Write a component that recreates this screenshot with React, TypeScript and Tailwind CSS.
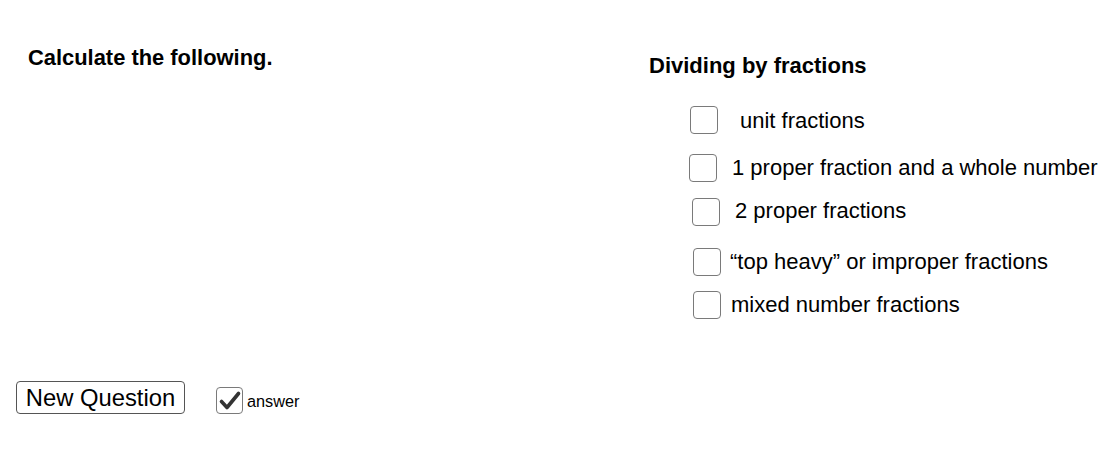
import React from "react";

const font = { fontFamily: '"Liberation Sans", Arial, sans-serif' };

function Box({ checked = false }: { checked?: boolean }) {
  return (
    <span className="flex h-[28px] w-[28px] shrink-0 items-center justify-center rounded-[4px] border border-[#7a7a7a] bg-white">
      {checked && (
        <svg width="24" height="24" viewBox="0 0 24 24">
          <path d="M3.5 12.5 L9 18.5 L20.5 4.5" fill="none" stroke="#333" strokeWidth="3.6" strokeLinecap="round" strokeLinejoin="round" />
        </svg>
      )}
    </span>
  );
}

const rows = [
  { label: "unit fractions", box: "ml-[41px]", gap: "gap-[22px]", top: "mt-[26px]", text: "mt-[1px]" },
  { label: "1 proper fraction and a whole number", box: "ml-[40px]", gap: "gap-[15px]", top: "mt-[20px]", text: "-mt-[1px]" },
  { label: "2 proper fractions", box: "ml-[43px]", gap: "gap-[15px]", top: "mt-[16px]", text: "-mt-[2px]" },
  { label: "\u201ctop heavy\u201d or improper fractions", box: "ml-[44px]", gap: "gap-[9px]", top: "mt-[22px]", text: "-mt-[1px]" },
  { label: "mixed number fractions", box: "ml-[44px]", gap: "gap-[10px]", top: "mt-[15px]", text: "-mt-[1px]" },
];

export default function App() {
  return (
    <div className="flex h-[455px] w-[1120px] overflow-hidden bg-white text-black" style={font}>
      {/* left side */}
      <div className="flex w-[649px] shrink-0 flex-col pl-[16px] pt-[46px]">
        <h1 className="ml-[12px] text-[21.9px] font-bold leading-[24px]">Calculate the following.</h1>
        <div className="mt-[311px] flex items-start">
          <button className="h-[33px] w-[169px] rounded-[4px] border border-[#555] bg-white text-[23.8px] leading-[31px]">
            New Question
          </button>
          <label className="ml-[31px] mt-[6px] flex items-center gap-[4px]">
            <span className="flex h-[27px] w-[27px] shrink-0 items-center justify-center rounded-[4px] border border-[#7a7a7a] bg-white">
              <svg width="24" height="24" viewBox="0 0 24 24">
                <path d="M3.5 12.5 L9 18.5 L20.5 4.5" fill="none" stroke="#333" strokeWidth="3.6" strokeLinecap="round" strokeLinejoin="round" />
              </svg>
            </span>
            <span className="mt-[2px] text-[16.3px] leading-[19px]">answer</span>
          </label>
        </div>
      </div>

      {/* right side */}
      <div className="flex flex-col pt-[54px]">
        <h2 className="text-[22px] font-bold leading-[24px]">Dividing by fractions</h2>
        {rows.map((r, i) => (
          <div key={r.label} className={`flex items-center ${r.gap} ${i === 0 ? "mt-[28px]" : r.top}`}>
            <span className={r.box}>
              <Box />
            </span>
            <span className={`${r.text} whitespace-nowrap text-[22px] leading-[24px]`}>{r.label}</span>
          </div>
        ))}
      </div>
    </div>
  );
}
